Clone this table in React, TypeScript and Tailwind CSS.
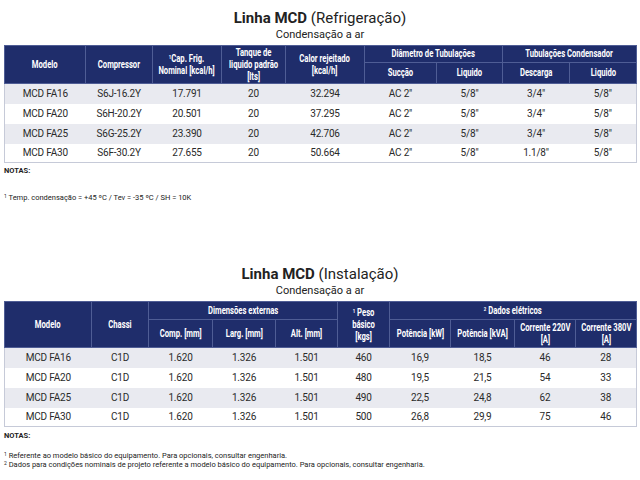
import type { ReactNode } from "react";

const thBase = "bg-[#1f2d6b] text-white font-bold text-[10.5px] leading-[12px] border border-[#4f5d95] text-center align-middle p-0 font-['Roboto',sans-serif]";
const td = "text-center text-[10px] tracking-[-0.2px] text-[#2a2a2a] align-middle p-0";

function Th({ children, rowSpan, colSpan }: { children: ReactNode; rowSpan?: number; colSpan?: number }) {
  return (
    <th rowSpan={rowSpan} colSpan={colSpan} className={thBase}>
      <div className="flex justify-center">
        <span className="inline-block whitespace-nowrap scale-x-[0.73] origin-center">{children}</span>
      </div>
    </th>
  );
}

type Row = string[];

const refRows: Row[] = [
  ["MCD FA16", "S6J-16.2Y", "17.791", "20", "32.294", "AC 2\"", "5/8\"", "3/4\"", "5/8\""],
  ["MCD FA20", "S6H-20.2Y", "20.501", "20", "37.295", "AC 2\"", "5/8\"", "3/4\"", "5/8\""],
  ["MCD FA25", "S6G-25.2Y", "23.390", "20", "42.706", "AC 2\"", "5/8\"", "3/4\"", "5/8\""],
  ["MCD FA30", "S6F-30.2Y", "27.655", "20", "50.664", "AC 2\"", "5/8\"", "1.1/8\"", "5/8\""],
];

const instRows: Row[] = [
  ["MCD FA16", "C1D", "1.620", "1.326", "1.501", "460", "16,9", "18,5", "46", "28"],
  ["MCD FA20", "C1D", "1.620", "1.326", "1.501", "480", "19,5", "21,5", "54", "33"],
  ["MCD FA25", "C1D", "1.620", "1.326", "1.501", "490", "22,5", "24,8", "62", "38"],
  ["MCD FA30", "C1D", "1.620", "1.326", "1.501", "500", "26,8", "29,9", "75", "46"],
];

function Title({ sub }: { sub: string }) {
  return (
    <div className="text-center text-[#222] font-['Roboto',sans-serif]">
      <h1 className="text-[15px] leading-[18px] pt-[1px]">
        <span className="font-bold">Linha MCD</span> ({sub})
      </h1>
      <p className="text-[11px] leading-[15px]">Condensação a ar</p>
    </div>
  );
}

function Body({ rows }: { rows: Row[] }) {
  return (
    <tbody>
      {rows.map((r, i) => (
        <tr key={i} className={`${i % 2 === 0 ? "bg-[#e9eaf0]" : "bg-white"} ${i === rows.length - 1 ? "h-[19px]" : "h-[20px]"}`}>
          {r.map((c, j) => (
            <td key={j} className={td}>{c}</td>
          ))}
        </tr>
      ))}
    </tbody>
  );
}

const note = "text-[7.5px] leading-[9px] text-[#222] font-['Roboto',sans-serif]";

export default function App() {
  return (
    <div className="w-[640px] h-[480px] bg-white px-[4px] pt-[8px] font-['Roboto',sans-serif] overflow-hidden">
      <Title sub="Refrigeração" />
      <table className="mt-[3px] w-[632px] table-fixed border-collapse border border-[#c6cad8]">
        <colgroup>
          {[81, 67, 69, 64, 79, 72, 66, 67, 67].map((w, i) => (
            <col key={i} style={{ width: w }} />
          ))}
        </colgroup>
        <thead>
          <tr className="h-[17px]">
            <Th rowSpan={2}>Modelo</Th>
            <Th rowSpan={2}>Compressor</Th>
            <Th rowSpan={2}><sup className="text-[6px]">1</sup>Cap. Frig.<br />Nominal [kcal/h]</Th>
            <Th rowSpan={2}>Tanque de<br />liquido padrão<br />[lts]</Th>
            <Th rowSpan={2}>Calor rejeitado<br />[kcal/h]</Th>
            <Th colSpan={2}>Diâmetro de Tubulações</Th>
            <Th colSpan={2}>Tubulações Condensador</Th>
          </tr>
          <tr className="h-[21px]">
            <Th>Sucção</Th>
            <Th>Liquido</Th>
            <Th>Descarga</Th>
            <Th>Liquido</Th>
          </tr>
        </thead>
        <Body rows={refRows} />
      </table>
      <p className={`mt-[3px] font-bold ${note}`}>NOTAS:</p>
      <p className={`mt-[18px] ${note}`}><sup className="text-[5px]">1</sup> Temp. condensação = +45 ºC / Tev = -35 ºC / SH = 10K</p>

      <div className="mt-[62px]">
        <Title sub="Instalação" />
      </div>
      <table className="mt-[3px] w-[632px] table-fixed border-collapse border border-[#c6cad8]">
        <colgroup>
          {[87, 57, 64, 63, 62, 52, 61, 64, 61, 61].map((w, i) => (
            <col key={i} style={{ width: w }} />
          ))}
        </colgroup>
        <thead>
          <tr className="h-[18px]">
            <Th rowSpan={2}>Modelo</Th>
            <Th rowSpan={2}>Chassi</Th>
            <Th colSpan={3}>Dimensões externas</Th>
            <Th rowSpan={2}><sup className="text-[6px]">1</sup> Peso<br />básico<br />[kgs]</Th>
            <Th colSpan={4}><sup className="text-[6px]">2</sup> Dados elétricos</Th>
          </tr>
          <tr className="h-[28px]">
            <Th>Comp. [mm]</Th>
            <Th>Larg. [mm]</Th>
            <Th>Alt. [mm]</Th>
            <Th>Potência [kW]</Th>
            <Th>Potência [kVA]</Th>
            <Th>Corrente 220V<br />[A]</Th>
            <Th>Corrente 380V<br />[A]</Th>
          </tr>
        </thead>
        <Body rows={instRows} />
      </table>
      <p className={`mt-[4px] font-bold ${note}`}>NOTAS:</p>
      <p className={`mt-[11px] ${note}`}><sup className="text-[5px]">1</sup> Referente ao modelo básico do equipamento. Para opcionais, consultar engenharia.</p>
      <p className={note}><sup className="text-[5px]">2</sup> Dados para condições nominais de projeto referente a modelo básico do equipamento. Para opcionais, consultar engenharia.</p>
    </div>
  );
}
